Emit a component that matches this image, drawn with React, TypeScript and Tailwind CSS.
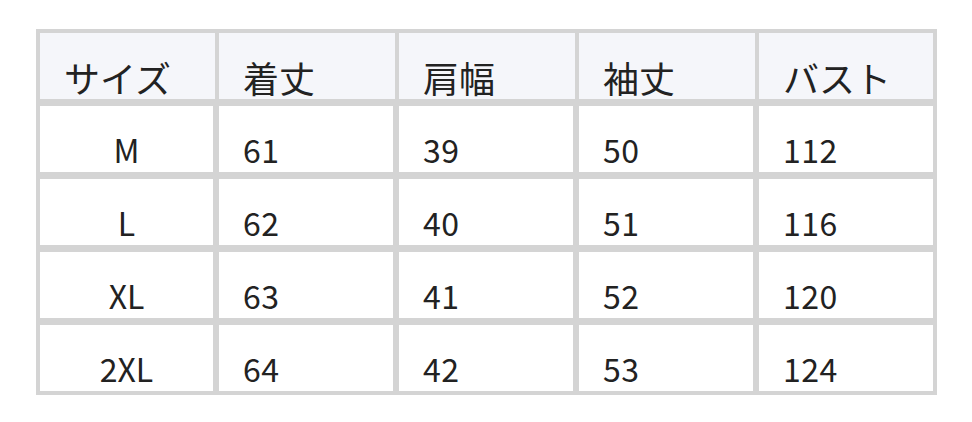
const HEADERS = ["サイズ", "着丈", "肩幅", "袖丈", "バスト"];

const ROWS = [
  ["M", "61", "39", "50", "112"],
  ["L", "62", "40", "51", "116"],
  ["XL", "63", "41", "52", "120"],
  ["2XL", "64", "42", "53", "124"],
];

export default function App() {
  return (
    <div className="min-h-screen bg-white pt-[29px] pl-[36px]" style={{ fontFamily: '"Noto Sans CJK JP", "Noto Sans", sans-serif' }}>
      <div className="flex w-[901px] flex-col gap-[7px] bg-[#d4d4d4] p-[4px] text-[#222]">
        {/* header */}
        <div className="grid grid-cols-[175px_176px_176px_176px_174px] gap-x-[4px]">
          {HEADERS.map((h) => (
            <div key={h} className="flex h-[66px] items-end bg-[#f5f6fa] pb-[4px] pl-[24px] text-[36px] leading-none">
              {h}
            </div>
          ))}
        </div>

        {/* body */}
        {ROWS.map((row) => (
          <div key={row[0]} className="grid grid-cols-[173px_174px_174px_174px_174px] gap-x-[6px]">
            {row.map((v, i) => (
              <div
                key={i}
                className={`flex h-[66px] items-end bg-white pb-[7px] text-[32px] leading-none ${i === 0 ? "justify-center" : "pl-[24px] tracking-[0.5px]"}`}
              >
                {v}
              </div>
            ))}
          </div>
        ))}
      </div>
    </div>
  );
}
